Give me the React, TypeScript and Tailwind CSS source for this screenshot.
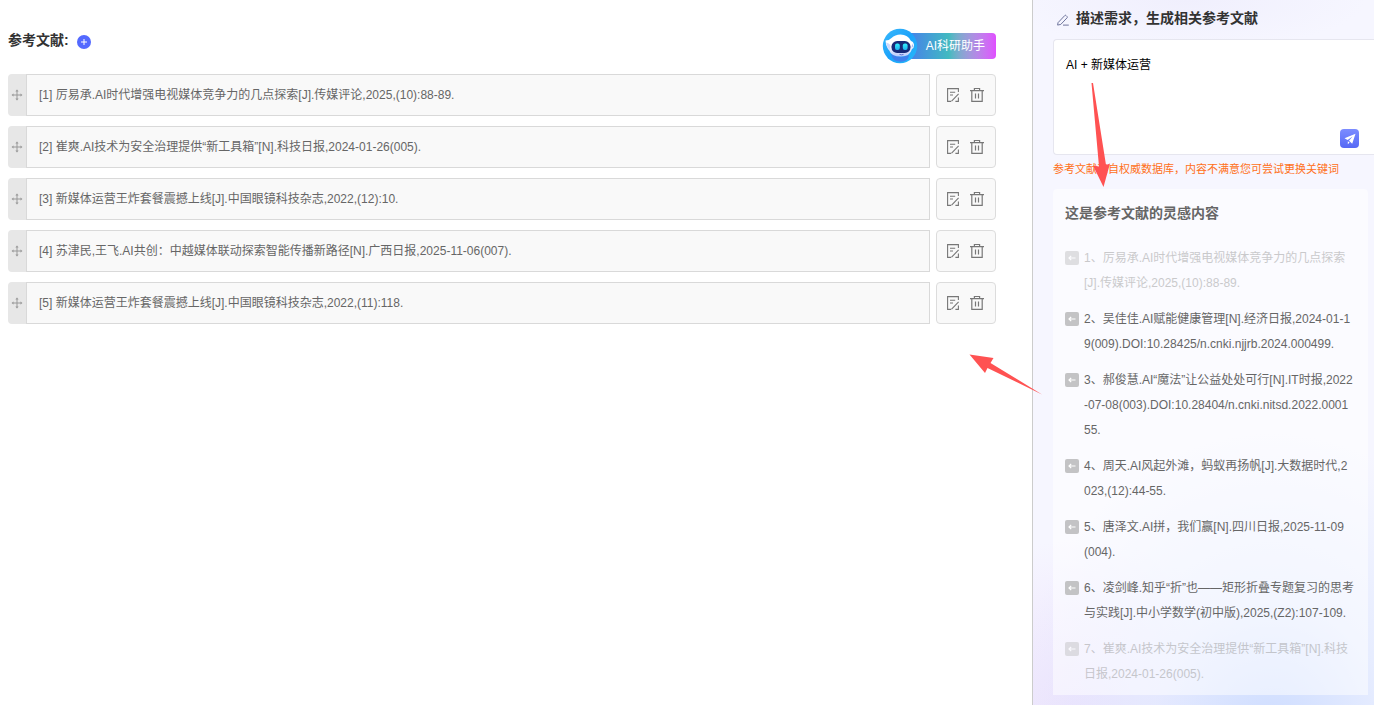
import { AiOutlineDrag } from "react-icons/ai";
import clsx from "clsx";

type Suggestion = {
  text: string;
  used?: boolean;
};

const references = [
  "厉易承.AI时代增强电视媒体竞争力的几点探索[J].传媒评论,2025,(10):88-89.",
  "崔爽.AI技术为安全治理提供“新工具箱”[N].科技日报,2024-01-26(005).",
  "新媒体运营王炸套餐震撼上线[J].中国眼镜科技杂志,2022,(12):10.",
  "苏津民,王飞.AI共创：中越媒体联动探索智能传播新路径[N].广西日报,2025-11-06(007).",
  "新媒体运营王炸套餐震撼上线[J].中国眼镜科技杂志,2022,(11):118.",
];

const suggestions: Suggestion[] = [
  { text: "厉易承.AI时代增强电视媒体竞争力的几点探索[J].传媒评论,2025,(10):88-89.", used: true },
  { text: "吴佳佳.AI赋能健康管理[N].经济日报,2024-01-1\n9(009).DOI:10.28425/n.cnki.njjrb.2024.000499." },
  { text: "郝俊慧.AI“魔法”让公益处处可行[N].IT时报,2022\n-07-08(003).DOI:10.28404/n.cnki.nitsd.2022.0001\n55." },
  { text: "周天.AI风起外滩，蚂蚁再扬帆[J].大数据时代,2\n023,(12):44-55." },
  { text: "唐泽文.AI拼，我们赢[N].四川日报,2025-11-09\n(004)." },
  { text: "凌剑峰.知乎“折”也——矩形折叠专题复习的思考与实践[J].中小学数学(初中版),2025,(Z2):107-109." },
  { text: "崔爽.AI技术为安全治理提供“新工具箱”[N].科技日报,2024-01-26(005).", used: true },
];

function NoteIcon() {
  return (
    <svg viewBox="0 0 14 16" className="h-4 w-3.5" fill="none" stroke="#777" strokeWidth="1.1">
      <path d="M12.4 5V1.6H1.6v12.8h3.6M4 5.2h5.2M4 8h3M5.6 14.2 12.6 6.8M9.4 14.4h3v-4" />
    </svg>
  );
}

function TrashIcon() {
  return (
    <svg viewBox="0 0 16 16" className="size-4" fill="none" stroke="#777" strokeWidth="1.2">
      <path d="M1 3.6h14M5.4 3.4V1.5h5.2v1.9M2.8 3.8v10.6h10.4V3.8M6.5 6.6v5M9.5 6.6v5" />
    </svg>
  );
}

function PencilIcon() {
  return (
    <svg viewBox="0 0 12 12" className="mt-1 size-3" fill="none" stroke="#6f759c" strokeWidth="1" strokeLinejoin="round" strokeLinecap="round">
      <path d="M1.3 8.4 7.8 1.5q.6-.6 1.2 0l1.1 1.1q.5.6 0 1.2L3.8 10.4l-2.8.6ZM6.4 11.1h5" />
    </svg>
  );
}

function InsertIcon() {
  return (
    <svg viewBox="0 0 14 14" className="size-3.5">
      <rect width="14" height="14" rx="2" fill="#c3c3c5" />
      <path d="M10.5 7H4M6.2 4.8 4 7l2.2 2.2" fill="none" stroke="#fff" strokeWidth="1.2" />
    </svg>
  );
}

function Robot() {
  return (
    <svg viewBox="0 0 36 36" className="absolute top-0 left-0 size-9">
      <defs>
        <linearGradient id="ring" x1="0" y1="0" x2="1" y2="1">
          <stop offset="0" stopColor="#39b9fb" />
          <stop offset="0.5" stopColor="#1ca2fa" />
          <stop offset="1" stopColor="#27bafa" />
        </linearGradient>
        <linearGradient id="head" x1="0" y1="0" x2="0" y2="1">
          <stop offset="0.5" stopColor="#fff" />
          <stop offset="1" stopColor="#b9c8fa" />
        </linearGradient>
        <linearGradient id="eye" x1="0" y1="0" x2="0" y2="1">
          <stop offset="0" stopColor="#35f0fb" />
          <stop offset="1" stopColor="#1db0f0" />
        </linearGradient>
      </defs>
      <circle cx="18" cy="18" r="17.2" fill="url(#ring)" />
      <path d="M9 26q9 5 18 1-.5 4.5-4 6-5.5 1.5-10-.5-3-2-4-6.5Z" fill="#3f7fec" />
      <path d="M3.5 12.5Q7 12.5 9.5 10 13 6.5 18.500 6.500q7.500 0 10.500 6.500 2.500.5 3 4 0 3-2 4-2 7.500-11 7.500Q9 28.500 7.300 22.500 4 19 3.500 12.500Z" fill="url(#head)" />
      <path d="M4 14.500q1 5 3.500 7.500l1-5q-1.500-2-4.500-2.500Z" fill="#ccd7fc" />
      <path d="M30 15.500q1.500 2-.2 4.500Z" fill="#7693ec" />
      <rect x="9.500" y="13" width="19" height="12" rx="5.600" fill="#172a78" />
      <rect x="13" y="15.500" width="4.800" height="6.500" rx="2" fill="url(#eye)" />
      <rect x="20.800" y="15.500" width="4.800" height="6.500" rx="2" fill="url(#eye)" />
      <path d="M17.500 26.400q2 .9 4 0" fill="none" stroke="#5168c9" strokeWidth="0.9" />
    </svg>
  );
}

function Arrows() {
  return (
    <>
      <svg viewBox="0 0 20 106" className="pointer-events-none absolute top-[82px] left-[58px] h-[106px] w-5" fill="#ff5252">
        <path d="M.5 1h1.5L15 83l4-1.500L12.500 105 2 83.500l6 1Z" />
      </svg>
      <svg viewBox="0 0 74 42" className="pointer-events-none absolute top-[354px] -left-16 h-[42px] w-[74px]" fill="#ff5252">
        <path d="M.5.5 24.500 4l-3 5L73 40.500 18.500 14l-2.500 5Z" />
      </svg>
    </>
  );
}

function ReferenceRow({ index, text }: { index: number; text: string }) {
  return (
    <li className="flex h-[42px]">
      <button type="button" aria-label="拖动排序" className="flex w-[18px] shrink-0 items-center justify-center rounded-l bg-[#e7e7e7]">
        <AiOutlineDrag className="size-3.5 text-[#999]" />
      </button>
      <input
        aria-label={`参考文献 ${index}`}
        defaultValue={`[${index}] ${text}`}
        className="min-w-0 flex-1 border border-[#d9d9d9] bg-[#f9f9f9] px-3 text-xs text-[#666] outline-none"
      />
      <div className="ml-1.5 flex w-[60px] shrink-0 items-center justify-center gap-2 rounded border border-[#dcdcdc] bg-[#f9f9f9] pr-0.5">
        <button type="button" aria-label="编辑" className="flex w-4 justify-center">
          <NoteIcon />
        </button>
        <button type="button" aria-label="删除" className="flex w-4 justify-center">
          <TrashIcon />
        </button>
      </div>
    </li>
  );
}

function SuggestionPanel() {
  return (
    <aside className="relative w-[342px] shrink-0 border-l border-[#ccc] bg-[#f6f6ff] bg-[radial-gradient(ellipse_260px_300px_at_70%_104%,#cddcff,#dfe8ffaa_45%,transparent),radial-gradient(ellipse_180px_180px_at_14%_102%,#ece1fc,transparent),radial-gradient(ellipse_180px_50px_at_45%_0%,#f0effd,transparent)] pl-5">
      <h2 className="flex h-[39px] items-center gap-[7px] pb-1 pl-1 text-sm font-bold text-[#333]">
        <PencilIcon />
        <label htmlFor="demand">描述需求，生成相关参考文献</label>
      </h2>
      <div className="relative h-[116px] rounded-l border border-r-0 border-[#e6e6ef] bg-white">
        <textarea
          id="demand"
          defaultValue="AI + 新媒体运营"
          className="block size-full resize-none bg-transparent px-3 py-4 text-xs leading-[18px] text-black outline-none"
        />
        <button
          type="button"
          aria-label="发送"
          className="absolute right-[15px] bottom-1.5 flex size-[19px] items-center justify-center rounded bg-linear-to-b from-[#7c8cff] to-[#5668f5]"
        >
          <svg viewBox="0 0 12 12" className="size-3" fill="#fff">
            <path d="M11.5.8.5 5.3l3.100 1.600L8.600 3.600 5 7.800l3.200 3Z" />
            <path d="M3.800 8.200v3l1.800-1.600Z" />
          </svg>
        </button>
      </div>
      <p className="pt-1.5 text-[11px] leading-4 text-[#ff7020]">参考文献来自权威数据库，内容不满意您可尝试更换关键词</p>
      <section className="mt-3 mr-1.5 rounded-t bg-white/50 px-3 pt-3 pb-2">
        <h3 className="text-sm leading-6 font-bold text-[#666]">这是参考文献的灵感内容</h3>
        <ol className="mt-[21px] flex flex-col gap-[11px]">
          {suggestions.map((item, i) => (
            <li key={item.text} className={clsx("flex gap-[5px]", item.used && "opacity-50")}>
              <button type="button" aria-label="插入参考文献" disabled={item.used} className="mt-[5px] size-3.5 shrink-0">
                <InsertIcon />
              </button>
              <span className={clsx("flex-1 text-xs leading-[25px] break-all whitespace-pre-line", item.used ? "text-[#999]" : "text-[#666]")}>
                {`${i + 1}、${item.text}`}
              </span>
            </li>
          ))}
        </ol>
      </section>
      <Arrows />
    </aside>
  );
}

export default function App() {
  return (
    <div className="flex min-h-screen overflow-hidden bg-white font-['Liberation_Sans','Noto_Sans_CJK_SC',sans-serif]">
      <main className="min-w-0 flex-1 pt-7 pr-9 pl-2">
        <header className="flex h-[35px] items-start justify-between">
          <h1 className="flex items-center gap-2 text-sm leading-6 font-bold text-[#333]">
            参考文献:
            <button type="button" aria-label="添加" className="mt-1 flex size-3.5 items-center justify-center rounded-full bg-[#5369ff]">
              <svg viewBox="0 0 8 8" className="size-2" stroke="#fff" strokeWidth="1">
                <path d="M4 1v6M1 4h6" />
              </svg>
            </button>
          </h1>
          <button type="button" className="relative flex h-[35px] w-[114px] items-center pl-5">
            <span className="flex h-[26px] flex-1 items-center justify-end rounded-r bg-linear-to-r from-[#4b73ee] via-[#42bac0] to-[#e04dff] pr-[11px] text-xs text-white">
              AI科研助手
            </span>
            <Robot />
          </button>
        </header>
        <ol className="mt-[11px] flex flex-col gap-2.5">
          {references.map((text, i) => (
            <ReferenceRow key={text} index={i + 1} text={text} />
          ))}
        </ol>
      </main>
      <SuggestionPanel />
    </div>
  );
}
